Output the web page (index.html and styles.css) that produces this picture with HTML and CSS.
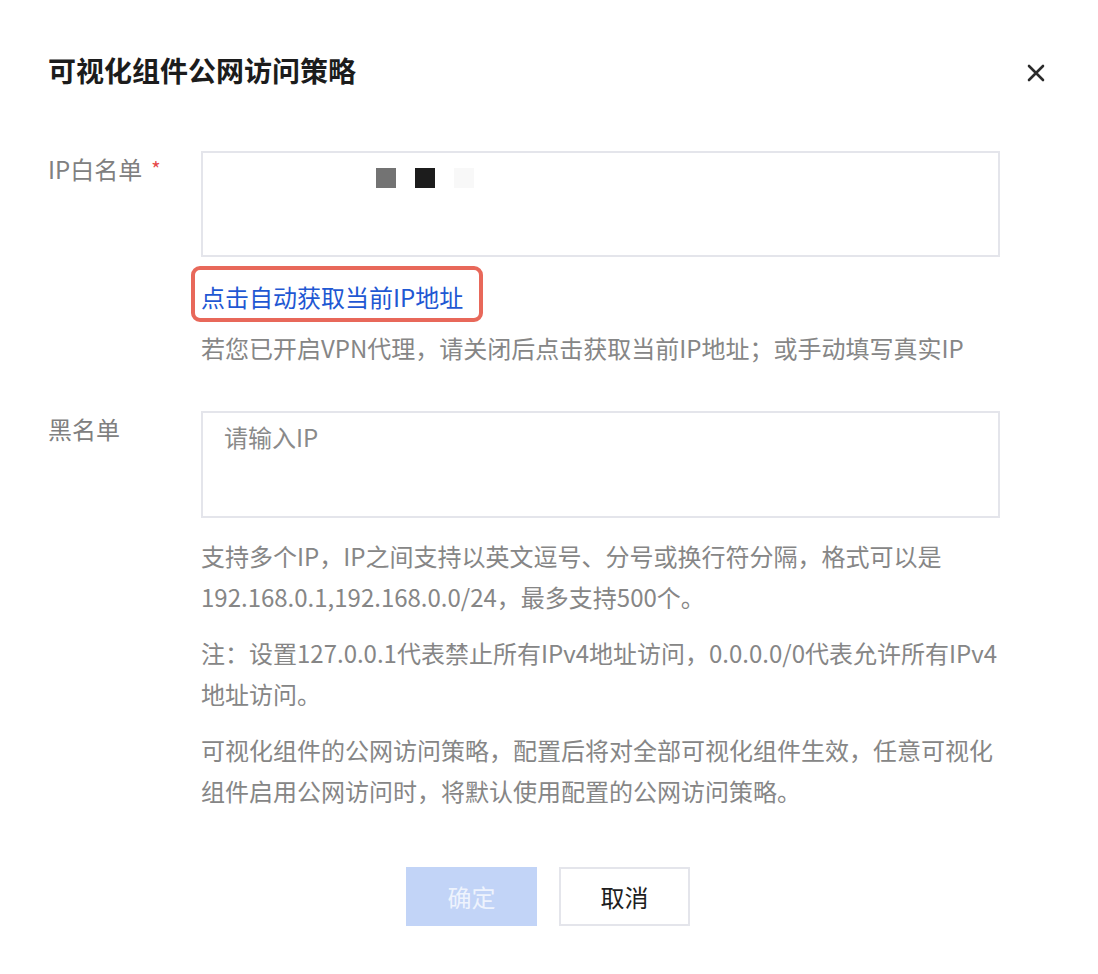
FILE: index.html
```html
<!DOCTYPE html>
<html lang="zh-CN">
<head>
  <meta charset="UTF-8">
  <meta name="viewport" content="width=device-width, initial-scale=1.0">
  <title>可视化组件公网访问策略</title>
  <link rel="stylesheet" href="styles.css">
</head>
<body>
  <div class="dialog">
    <div class="dialog-header">
      <h3 class="dialog-title">可视化组件公网访问策略</h3>
      <button class="dialog-close" aria-label="关闭">
        <svg width="18" height="18" viewBox="0 0 18 18">
          <path d="M2 2 L16 16 M16 2 L2 16" stroke="#2b2b2b" stroke-width="2.6" stroke-linecap="round" fill="none"/>
        </svg>
      </button>
    </div>

    <div class="form">
      <div class="form-item">
        <label class="form-label">IP白名单<span class="required">*</span></label>
        <div class="form-control">
          <div class="ip-box">
            <!-- IP values are masked in the source -->
            <span class="mask">
              <i class="mask-gray"></i>
              <i class="mask-dark"></i>
              <i class="mask-light"></i>
            </span>
          </div>
          <a class="fetch-ip" href="#">点击自动获取当前IP地址</a>
          <p class="hint">若您已开启VPN代理，请关闭后点击获取当前IP地址；或手动填写真实IP</p>
        </div>
      </div>

      <div class="form-item black-list">
        <label class="form-label">黑名单</label>
        <div class="form-control">
          <div class="ip-box">
            <span class="placeholder">请输入IP</span>
          </div>
          <p class="help">支持多个IP，IP之间支持以英文逗号、分号或换行符分隔，格式可以是192.168.0.1,192.168.0.0/24，最多支持500个。</p>
          <p class="help">注：设置127.0.0.1代表禁止所有IPv4地址访问，0.0.0.0/0代表允许所有IPv4地址访问。</p>
          <p class="help">可视化组件的公网访问策略，配置后将对全部可视化组件生效，任意可视化组件启用公网访问时，将默认使用配置的公网访问策略。</p>
        </div>
      </div>
    </div>

    <div class="dialog-footer">
      <button class="btn btn-primary" disabled>确定</button>
      <button class="btn">取消</button>
    </div>
  </div>
</body>
</html>
```

FILE: styles.css
```css
body {
  margin: 0;
  background: #fff;
  font-family: "Noto Sans CJK SC", "Noto Sans", sans-serif;
  color: #222;
}
.dialog {
  width: 1098px;
  box-sizing: border-box;
  padding: 50px 53px 40px 48px;
}
.dialog-header {
  display: flex;
  justify-content: space-between;
  align-items: center;
}
.dialog-title {
  margin: 0;
  font-size: 28px;
  line-height: 40px;
  font-weight: 700;
  color: #1c1c1c;
}
.dialog-close {
  display: flex;
  padding: 0;
  margin-top: 6px;
  border: none;
  background: none;
  cursor: pointer;
}
.form {
  margin-top: 61px;
}
.form-item {
  display: grid;
  grid-template-columns: 153px 799px;
}
.black-list {
  margin-top: 43px;
}
.form-label {
  font-size: 24px;
  line-height: 36px;
  color: #808080;
}
.required {
  display: inline-block;
  margin-left: 9px;
  font-size: 20px;
  line-height: 20px;
  color: #e54848;
  vertical-align: 2px;
}
.ip-box {
  height: 106px;
  box-sizing: border-box;
  border: 2px solid #e4e5eb;
  padding: 4px 21px;
  font-size: 24px;
  line-height: 40px;
}
.black-list .ip-box {
  height: 107px;
}
.placeholder {
  color: #8a8a8a;
}
.mask {
  display: flex;
  gap: 19px;
  margin: 11px 0 0 152px;
}
.mask i {
  width: 20px;
  height: 20px;
}
.mask-gray { background: #737373; }
.mask-dark { background: #1c1c1c; }
.mask-light { background: #f8f8f8; }
.fetch-ip {
  position: relative;
  display: inline-block;
  margin-top: 20px;
  font-size: 24px;
  line-height: 40px;
  color: #1f58d3;
  text-decoration: none;
}
/* red annotation frame from the original screenshot */
.fetch-ip::after {
  content: "";
  position: absolute;
  top: -11px;
  left: -10px;
  width: 292px;
  height: 56px;
  box-sizing: border-box;
  border: 4px solid #e8685a;
  border-radius: 9px;
}
.hint {
  margin: 11px 0 0;
  font-size: 24px;
  line-height: 40px;
  color: #868686;
}
.help {
  margin: 15px 0 0;
  font-size: 24px;
  line-height: 41px;
  color: #868686;
  width: 810px;
}
.ip-box + .help {
  margin-top: 17px;
}
.dialog-footer {
  display: flex;
  justify-content: center;
  gap: 22px;
  margin-top: 56px;
  padding-left: 3px;
}
.btn {
  width: 131px;
  height: 59px;
  border: 2px solid #e4e5eb;
  background: #fff;
  font-family: inherit;
  font-size: 24px;
  color: #1e1e1e;
  cursor: pointer;
}
.btn-primary {
  border-color: #c2d4f7;
  background: #c2d4f7;
  color: #eef3fd;
  cursor: not-allowed;
}
```
